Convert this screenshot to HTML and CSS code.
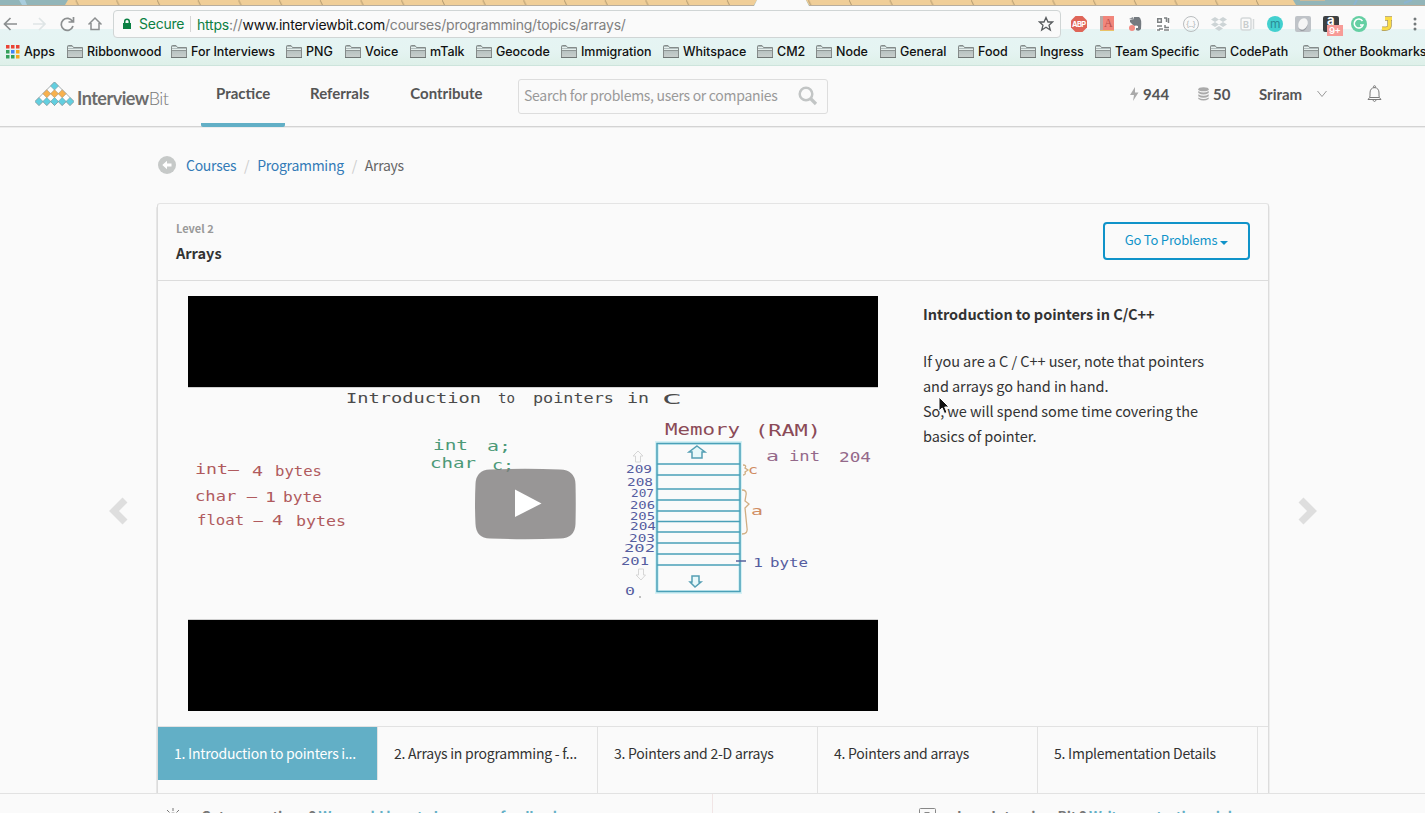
FILE: index.html
```
<!DOCTYPE html>
<html lang="en">
<head>
<meta charset="utf-8">
<title>Arrays - InterviewBit</title>
<link rel="stylesheet" href="styles.css">
</head>
<body>
<svg class="defs" width="0" height="0" aria-hidden="true">
  <defs>
    <linearGradient id="fold" x1="0" y1="0" x2="0" y2="1"><stop offset="0" stop-color="#a9b8b8"/><stop offset="1" stop-color="#c9cfcd"/></linearGradient>
    <pattern id="tabs" width="40.7" height="6" patternUnits="userSpaceOnUse" patternTransform="translate(35 0)"><path d="M0 0L2.500 5" stroke="#b39a70" stroke-width="1"/></pattern>
  </defs>
  <symbol id="folder" viewBox="0 0 16 13">
    <path d="M.5 12.500V1.500Q.5.500 1.500.500H5L6.500 2.500H15.500V12.500Z" fill="url(#fold)" stroke="#858b8a"/>
    <path d="M1 2.500H6M1 4.500H15" stroke="#e5eeec" fill="none"/><path d="M1 5.500H15" stroke="#8f9796"/><path d="M0 12.500H16" stroke="#6f7675"/>
  </symbol>
</svg>

<div class="browser">
  <svg class="tabstrip" width="1425" height="6">
    <rect width="1425" height="6" fill="#92b5b9"/>
    <path d="M19 0H25L27 5H22Z" fill="#a9cddd"/>
    <path d="M68 0H757L754 5H65Z" fill="#f0ce98"/><path d="M68 0H757L754 5H65Z" fill="url(#tabs)"/>
    <path d="M757 0H806L809 6H754Z" fill="#fafafa"/>
    <path d="M806 0H1293L1296 5H809Z" fill="#f0ce98"/><path d="M806 0H1290L1293 5H809Z" fill="url(#tabs)"/>
    <path d="M1300 0H1325" stroke="#c8ba9b" stroke-width="2"/><path d="M1357 0L1354 5M1404 3L1412 0" stroke="#8bb4d0" stroke-width="2"/>
    <path d="M0 5.500H754M809 5.500H1425" stroke="#b8ad9d"/>
  </svg>
  <div class="toolbar">
    <div class="controls">
      <svg width="107" height="28" fill="none" stroke="#8c8f90" stroke-width="1.700">
        <path d="M17 14H5M10.500 8L4.500 14L10.500 20"/>
        <path d="M33 14H44M39 8L45 14L39 20" stroke="#dfe5e6"/>
        <path d="M72.500 11.500A6 6 0 1 0 73 16M73.500 7V12H68.500" />
        <path d="M88.500 14.500L95 8L101.500 14.500M91 13V19.500H99V13" stroke-width="1.500"/>
      </svg>
    </div>
    <div class="omnibox">
      <svg width="10" height="12"><path d="M1 5H9V11H1Z" fill="#0b8043"/><path d="M2.700 5V3.500A2.300 2.300 0 0 1 7.300 3.500V5" fill="none" stroke="#0b8043" stroke-width="1.500"/></svg>
      <span class="secure">Secure</span>
      <span class="url"><b>https</b>://<i>www.interviewbit.com</i>/courses/programming/topics/arrays/</span>
      <svg class="star" width="16" height="16"><path d="M8 1.500L10 6H14.500L11 9.200L12.300 14L8 11.300L3.700 14L5 9.200L1.500 6H6Z" fill="none" stroke="#5a5d60" stroke-width="1.300"/></svg>
    </div>
    <svg class="extensions" width="364" height="28" viewBox="1061 10 364 28">
      <path d="M1075.500 16H1082.500L1087 20.500V27.500L1082.500 32H1075.500L1071 27.500V20.500Z" fill="#df6558"/><text x="1072" y="27.200" textLength="14" font-size="7.500" font-weight="700" fill="#fff">ABP</text>
      <path d="M1100 16H1114V30H1100Z" fill="#f1857b"/><path d="M1100 16H1103V30H1100Z" fill="#b7aaa7"/><text x="1104" y="27" font-size="12" fill="#b94f4b" font-family="Liberation Serif">A</text><path d="M1100 30.500H1114" stroke="#e9c267"/>
      <path d="M1134 17H1139Q1142 18 1141 29Q1139 32 1136 30V28H1138V26Q1136 25 1134 26L1130 22V20H1133Z" fill="#747a80"/><path d="M1129 19L1133 17V20Z" fill="#8c9196"/><circle cx="1132" cy="28" r="3" fill="#f28b82"/>
      <rect x="1156" y="16" width="14" height="15" fill="#fff"/>
      <g fill="none" stroke="#7d8183" stroke-width="1.500"><path d="M1157.700 18.700H1161.300V22.300H1157.700ZM1164 18H1166.500V22M1157 26H1162M1159 29H1163M1165 25V27.500H1169M1157 30H1160M1164 30H1169M1168.500 18V23"/></g>
      <circle cx="1191" cy="24" r="7.500" fill="none" stroke="#b9bdbf"/><text x="1186" y="27" textLength="10" font-size="8" fill="#b0b4b6">{...}</text>
      <path d="M1215 17L1219 19.500L1215 22L1211 19.500ZM1223 17L1227 19.500L1223 22L1219 19.500ZM1215 22L1219 24.500L1215 27L1211 24.500ZM1223 22L1227 24.500L1223 27L1219 24.500ZM1219 26L1223 28.500L1219 31L1215 28.500Z" fill="#cdd4d6"/>
      <rect x="1241" y="18" width="10" height="12" rx="2" fill="none" stroke="#d5d9da" stroke-width="1.500"/><text x="1243" y="28" font-size="9" font-weight="700" fill="#c9cdce">B</text><path d="M1253.500 19V29" stroke="#d5d9da" stroke-width="1.500"/>
      <circle cx="1275" cy="24" r="8" fill="#43d0cf"/><text x="1270" y="28" font-size="12" fill="#2b8b96">m</text>
      <rect x="1295" y="16" width="16" height="16" rx="2" fill="#bfc3c8"/><ellipse cx="1303" cy="24" rx="4.500" ry="6" fill="#f5f5f5" transform="rotate(25 1303 24)"/><path d="M1298 28Q1304 33 1308 24Q1306 32 1301 31" fill="#999da3"/>
      <rect x="1323" y="16" width="16" height="16" rx="2" fill="#3d4042"/><text x="1327" y="25" font-size="13" font-weight="700" fill="#fff">a</text><rect x="1327" y="25" width="16" height="11" fill="#f79b97"/><text x="1329" y="34.200" textLength="12" font-size="9.500" font-weight="600" fill="#fff">9+</text>
      <circle cx="1359" cy="24" r="8" fill="#65cfa3"/><path d="M1362.500 21A4.500 4.500 0 1 0 1363 25H1360" fill="none" stroke="#fff" stroke-width="1.500"/>
      <path d="M1385 18.500H1392M1389.500 19V26Q1389 29.500 1382 28.500" fill="none" stroke="#a9975a" stroke-width="4.500"/><path d="M1385 18.500H1392M1389.500 19V26Q1389 29.500 1382 28.500" fill="none" stroke="#fadb48" stroke-width="3"/>
      <g fill="#74797b"><circle cx="1415" cy="19" r="1.500"/><circle cx="1415" cy="24" r="1.500"/><circle cx="1415" cy="29" r="1.500"/></g>
    </svg>
  </div>
  <div class="bookmarks">
    <span><svg width="14" height="14"><g fill="#ea4335"><path d="M0 0H3.500V3.500H0ZM5 0H8.500V3.500H5ZM10 0H13.500V3.500H10Z"/></g><path d="M0 5H3.500V8.500H0ZM0 10H3.500V13.500H0ZM5 10H8.500V13.500H5Z" fill="#34a05a"/><path d="M5 5H8.500V8.500H5Z" fill="#4285f4"/><path d="M10 5H13.500V8.500H10ZM10 10H13.500V13.500H10Z" fill="#f4a81c"/></svg>Apps</span>
    <span><svg width="16" height="13"><use href="#folder"/></svg>Ribbonwood</span>
    <span><svg width="16" height="13"><use href="#folder"/></svg>For Interviews</span>
    <span><svg width="16" height="13"><use href="#folder"/></svg>PNG</span>
    <span><svg width="16" height="13"><use href="#folder"/></svg>Voice</span>
    <span><svg width="16" height="13"><use href="#folder"/></svg>mTalk</span>
    <span><svg width="16" height="13"><use href="#folder"/></svg>Geocode</span>
    <span><svg width="16" height="13"><use href="#folder"/></svg>Immigration</span>
    <span><svg width="16" height="13"><use href="#folder"/></svg>Whitspace</span>
    <span><svg width="16" height="13"><use href="#folder"/></svg>CM2</span>
    <span><svg width="16" height="13"><use href="#folder"/></svg>Node</span>
    <span><svg width="16" height="13"><use href="#folder"/></svg>General</span>
    <span><svg width="16" height="13"><use href="#folder"/></svg>Food</span>
    <span><svg width="16" height="13"><use href="#folder"/></svg>Ingress</span>
    <span><svg width="16" height="13"><use href="#folder"/></svg>Team Specific</span>
    <span><svg width="16" height="13"><use href="#folder"/></svg>CodePath</span>
    <span><svg width="16" height="13"><use href="#folder"/></svg>Other Bookmarks</span>
  </div>
</div>

<header class="site-header">
  <a class="logo">
    <svg width="39" height="24" viewBox="0 0 39 24">
      <g stroke="#8d9799" stroke-width=".8"><path d="M19.500 0L39 19.500L35 23.500L31.200 19.500L27.200 23.500L23.400 19.500L19.500 23.500L15.600 19.500L11.800 23.500L7.900 19.500L4 23.500L0 19.500Z" fill="#fff"/></g>
      <g fill="#62cfe0" stroke="#7f9a9f" stroke-width=".6"><path d="M19.500 0L23.500 4L19.500 8L15.500 4ZM4 15.500L8 19.500L4 23.500L0 19.500ZM11.800 15.500L15.800 19.500L11.800 23.500L7.800 19.500ZM19.500 15.500L23.500 19.500L19.500 23.500L15.500 19.500ZM27.200 15.500L31.200 19.500L27.200 23.500L23.200 19.500ZM35 15.500L39 19.500L35 23.500L31 19.500Z"/></g>
      <g fill="#f8b14e" stroke="#a5957c" stroke-width=".6"><path d="M11.800 7.700L15.800 11.700L11.800 15.700L7.800 11.700ZM19.500 7.700L23.500 11.700L19.500 15.700L15.500 11.700ZM27.200 7.700L31.200 11.700L27.200 15.700L23.200 11.700Z"/></g>
    </svg>
    <span class="wordmark"><b>Interview</b>Bit</span>
  </a>
  <nav class="nav"><a class="active">Practice</a><a>Referrals</a><a>Contribute</a></nav>
  <div class="search"><span>Search for problems, users or companies</span>
    <svg width="20" height="20" fill="none" stroke="#c2c5c5"><circle cx="8" cy="8" r="6.300" stroke-width="2.500"/><path d="M12.500 12.500L18 18" stroke-width="3.200"/></svg>
  </div>
  <div class="account">
    <span class="stat"><svg width="9" height="14"><path d="M5 0L0 8H4L3 14L8.500 5.500H5Z" fill="#aaa"/></svg>944</span>
    <span class="stat"><svg width="11" height="14"><g fill="#aaa"><ellipse cx="5.500" cy="2.300" rx="5.200" ry="2"/><path d="M.3 4Q5.500 7 10.700 4V6Q5.500 9 .3 6ZM.3 7.200Q5.500 10.200 10.700 7.200V9.200Q5.500 12.200 .3 9.200ZM.3 10.400Q5.500 13.400 10.700 10.400V12Q5.500 15 .3 12Z"/></g></svg>50</span>
    <span class="user">Sriram<svg width="10" height="8"><path d="M.5 1L5 6.500L9.500 1" fill="none" stroke="#999"/></svg></span>
    <svg class="bell" width="15" height="18" fill="none" stroke="#7b7b7b"><path d="M7.500 2.500Q3 3 3 8V11Q3 12.500 1 14.500H14Q12 12.500 12 11V8Q12 3 7.500 2.500Z"/><circle cx="7.500" cy="1.700" r="1"/><path d="M5.500 15Q7.500 18 9.500 15M3 12.500H12"/></svg>
  </div>
</header>

<main class="page">
  <nav class="crumbs">
    <svg width="18" height="18"><circle cx="9" cy="9" r="9" fill="#c6c9c8"/><path d="M4.300 9L9 4.800V7.400H13.500V10.600H9V13.200Z" fill="#fff"/></svg>
    <a>Courses</a><i>/</i><a>Programming</a><i>/</i><span>Arrays</span>
  </nav>
  <div class="stage">
    <svg class="prev" width="22" height="30"><path d="M17 4L6 15L17 26" fill="none" stroke="#dedede" stroke-width="7"/></svg>
    <section class="card">
      <div class="card-head">
        <div><p class="level">Level 2</p><h1>Arrays</h1></div>
        <button class="goto"><span>Go To Problems</span><svg width="8" height="4"><path d="M0 0H8L4 4Z" fill="#0f93c9"/></svg></button>
      </div>
      <div class="lesson">
        <svg class="video" width="690" height="415" viewBox="188 296 690 415">
          <rect x="188" y="296" width="690" height="91"/><rect x="188" y="620" width="690" height="91"/>
          <path d="M188 387.500H878M188 619.500H878" stroke="#cfcfcf"/>
          <g class="ink dark"><text x="346" y="403" textLength="135" lengthAdjust="spacingAndGlyphs">Introduction</text><text x="498" y="403" textLength="17" lengthAdjust="spacingAndGlyphs">to</text><text x="533" y="403" textLength="81" lengthAdjust="spacingAndGlyphs">pointers</text><text x="627" y="403" textLength="22" lengthAdjust="spacingAndGlyphs">in</text><text x="662" y="404" textLength="20" lengthAdjust="spacingAndGlyphs">C</text></g>
          <g class="ink red"><text x="195" y="474" textLength="44" lengthAdjust="spacingAndGlyphs">int–</text><text x="252" y="476" textLength="11" lengthAdjust="spacingAndGlyphs">4</text><text x="275" y="476" textLength="47" lengthAdjust="spacingAndGlyphs">bytes</text><text x="195" y="501" textLength="62" lengthAdjust="spacingAndGlyphs">char –</text><text x="265" y="502" textLength="11" lengthAdjust="spacingAndGlyphs">1</text><text x="283" y="502" textLength="39" lengthAdjust="spacingAndGlyphs">byte</text><text x="197" y="525" textLength="66" lengthAdjust="spacingAndGlyphs">float –</text><text x="272" y="525" textLength="11" lengthAdjust="spacingAndGlyphs">4</text><text x="296" y="526" textLength="50" lengthAdjust="spacingAndGlyphs">bytes</text></g>
          <g class="ink green"><text x="433" y="450" textLength="35" lengthAdjust="spacingAndGlyphs">int</text><text x="487" y="451" textLength="24" lengthAdjust="spacingAndGlyphs">a;</text><text x="430" y="468" textLength="46" lengthAdjust="spacingAndGlyphs">char</text><text x="492" y="470" textLength="22" lengthAdjust="spacingAndGlyphs">c;</text></g>
          <g class="ink maroon"><text x="665" y="435" textLength="75" lengthAdjust="spacingAndGlyphs">Memory</text><text x="755" y="436" textLength="66" lengthAdjust="spacingAndGlyphs">(RAM)</text></g>
          <g class="ink plum"><text x="766" y="461" textLength="13" lengthAdjust="spacingAndGlyphs">a</text><text x="789" y="461" textLength="31" lengthAdjust="spacingAndGlyphs">int</text><text x="839" y="462" textLength="32" lengthAdjust="spacingAndGlyphs">204</text></g>
          <path d="M657 443H740V592H657Z" fill="none" stroke="#d5f1f5" stroke-width="4"/>
          <path d="M657 443.500H740V591.500H657ZM657 464H740M657 475H740M657 489H740M657 500H740M657 511H740M657 521.500H740M657 532H740M657 543H740M657 554H740M657 565H740" fill="none" stroke="#4aa0b8" stroke-width="1.500"/>
          <path d="M697 446L705 452H702V458H692V452H689ZM695 587L690 582H692V576H699V582H701Z" fill="#e7f8fa" stroke="#559fb4" stroke-width="1.500"/>
          <path d="M638 451L643 456H640.500V462H635.500V456H633ZM641 580L636 575H638.500V569H643.500V575H645.500Z" fill="none" stroke="#d6d6d6"/>
          <g class="ink blue"><text x="626" y="473" textLength="26" lengthAdjust="spacingAndGlyphs">209</text><text x="627" y="486" textLength="26" lengthAdjust="spacingAndGlyphs">208</text><text x="631" y="497" textLength="23" lengthAdjust="spacingAndGlyphs">207</text><text x="630" y="508.500" textLength="25" lengthAdjust="spacingAndGlyphs">206</text><text x="630" y="519.500" textLength="25" lengthAdjust="spacingAndGlyphs">205</text><text x="630" y="530" textLength="26" lengthAdjust="spacingAndGlyphs">204</text><text x="629" y="541.500" textLength="26" lengthAdjust="spacingAndGlyphs">203</text><text x="624" y="552" textLength="31" lengthAdjust="spacingAndGlyphs">202</text><text x="621" y="565" textLength="28" lengthAdjust="spacingAndGlyphs">201</text><text x="625" y="595" textLength="10" lengthAdjust="spacingAndGlyphs">0</text></g>
          <path d="M736 561H746" stroke="#56629d" stroke-width="1.500"/><circle cx="640" cy="597" r="1" fill="#aaa"/>
          <g class="ink indigo"><text x="753" y="567" textLength="10" lengthAdjust="spacingAndGlyphs">1</text><text x="770" y="567" textLength="38" lengthAdjust="spacingAndGlyphs">byte</text></g>
          <g fill="none" stroke="#d0ae83" stroke-width="1.300"><path d="M743 465Q747 465 745 468L748 470L745 472Q746 475 743 475M742 490Q747 490 746 495L745 501L749 504L745 508L747 528Q748 534 742 534"/></g>
          <g class="ink orange"><text x="748" y="474" textLength="10" lengthAdjust="spacingAndGlyphs">c</text><text x="751" y="515" textLength="12" lengthAdjust="spacingAndGlyphs">a</text></g>
          <path d="M490 469.500Q525 468 560 469.500Q575 470 575.500 484Q576 504 575.500 524Q575 538 560 538.500Q525 540 490 538.500Q476 538 475.500 524Q474.500 504 475.500 484Q476 470 490 469.500Z" fill="#7f7d7d" fill-opacity=".8"/><path d="M515 489.500L541.500 503.500L515 517Z" fill="#fff"/>
        </svg>
        <article class="notes">
          <h2>Introduction to pointers in C/C++</h2>
          <p>If you are a C / C++ user, note that pointers<br>and arrays go hand in hand.<br>So, we will spend some time covering the<br>basics of pointer.</p>
        </article>
      </div>
      <div class="steps">
        <a class="current">1. Introduction to pointers i...</a><a>2. Arrays in programming - f...</a><a>3. Pointers and 2-D arrays</a><a>4. Pointers and arrays</a><a>5. Implementation Details</a>
      </div>
    </section>
    <svg class="next" width="22" height="30"><path d="M5 4L16 15L5 26" fill="none" stroke="#dedede" stroke-width="7"/></svg>
  </div>
</main>

<footer class="feedback">
  <div class="suggest">
    <svg width="16" height="20" fill="none" stroke="#777"><path d="M8 1V4M2 3L4.500 5.500M14 3L11.500 5.500M0 9H2M14 9H16M4 11A4 5 0 1 1 12 11"/></svg>
    <span>Got suggestions ? <a>We would love to hear your feedback.</a></span>
  </div>
  <div class="love">
    <svg width="18" height="20" fill="none" stroke="#888"><rect x=".5" y="1.500" width="16" height="15" rx="1"/><path d="M6 5V9M6 5.500H10M10 5V9"/></svg>
    <span>Love Interview Bit ? <a>Write us a testimonial.</a></span>
  </div>
</footer>
<svg class="cursor" width="14" height="20"><path d="M1 1V15L4.200 12L6.500 17.500L9 16.500L6.700 11H11Z" fill="#111" stroke="#fff"/></svg>
</body>
</html>
```
FILE: styles.css
```
* { box-sizing: border-box; }
body { margin: 0; width: 1425px; height: 813px; overflow: hidden; background: #fafafa; color: #333; font-family: "Noto Sans CJK SC", sans-serif; font-size: 15px; display: flex; flex-direction: column; }
svg { display: block; flex: none; }
.defs { position: absolute; }
p, h1, h2 { margin: 0; }

.browser { height: 66px; flex: none; font-family: Inter, sans-serif; background: linear-gradient(#fafafa 29px, #e6f4f4 29px, #e5f4f2 50px, #def0e9 65px); border-bottom: 1px solid #cde4dc; }
.toolbar { height: 32px; padding-top: 4px; display: flex; }
.controls { width: 113px; }
.omnibox { width: 948px; height: 28px; border: 1px solid #d0d5d5; border-radius: 4px; background: #fafafa; display: flex; align-items: center; padding: 0 6px 0 8px; font-size: 14px; white-space: nowrap; }
.secure { color: #0b8043; margin-left: 7px; width: 52px; height: 16px; line-height: 16px; border-right: 1px solid #d5d5d5; letter-spacing: -.25px; }
.url { margin-left: 6px; color: #808080; letter-spacing: -.22px; }
.url b { font-weight: 400; color: #0b8043; }
.url i { font-style: normal; color: #111; }
.star { margin-left: auto; }
.bookmarks { height: 27px; padding-left: 6px; display: grid; grid-template-columns: 61px 104px 115px 59px 65px 66px 85px 102px 94px 59px 64px 78px 62px 75px 115px 93px 122px; align-items: center; font-size: 12.5px; font-weight: 500; letter-spacing: -.04px; color: #111; white-space: nowrap; }
.bookmarks span { display: flex; align-items: center; gap: 4px; }

.site-header { height: 61px; display: flex; border-bottom: 1px solid #d3d3d3; box-shadow: 0 1px 0 #ececec; font-family: Lato, sans-serif; flex: none; }
.logo { width: 201px; flex: none; padding: 16px 0 0 35px; display: flex; gap: 3px; color: #777; }
.wordmark { font: 300 18px/30px Lato, sans-serif; letter-spacing: -.5px; margin-top: 1px; }
.wordmark b { color: #6c6c6c; font-weight: 700; }
.nav { width: 317px; flex: none; display: flex; gap: 11px; font-weight: 700; font-size: 15px; color: #555; }
.nav a { height: 61px; padding: 0 15px; line-height: 55px; }
.nav .active { width: 84px; margin-right: -1px; border-bottom: 4px solid #62afc6; border-radius: 0 0 2px 2px; }
.search { width: 310px; flex: none; height: 35px; margin: 13px 0 0; border: 1px solid #ddd; border-radius: 3px; padding: 0 9px 0 5px; display: flex; align-items: center; justify-content: space-between; color: #999; font-family: "Noto Sans CJK SC", sans-serif; font-size: 14px; line-height: 31px; letter-spacing: -.29px; white-space: nowrap; }
.search span { height: 33px; }
.search svg { margin-top: -2px; }
.account { flex: 1; height: 55px; display: grid; grid-template-columns: 68px 61px 108px 15px; padding-left: 302px; align-items: center; font-weight: 700; font-size: 15px; color: #555; }
.stat { display: flex; align-items: center; gap: 4px; }
.user { display: flex; align-items: center; gap: 15px; }

.page { height: 666px; flex: none; overflow: hidden; }
.crumbs { height: 76px; padding: 28px 0 0 158px; display: flex; font-size: 14px; line-height: 20px; letter-spacing: -.28px; color: #666; }
.crumbs svg { margin-top: 1px; }
.crumbs a { color: #337ab7; }
.crumbs a:first-of-type { margin-left: 10px; }
.crumbs i { width: 21px; text-align: center; color: #ccc; font-style: normal; }
.stage { display: grid; grid-template-columns: 157px 1112px 156px; }
.prev { margin: 293px 0 0 108px; }
.next { margin: 293px 0 0 27px; }
.card { height: 600px; border: 1px solid #dcdcdc; border-top-color: #e4e4e4; border-radius: 3px; box-shadow: -2px 3px 0 -1px #e6e6e6, -1px 3px 0 #e6e6e6, 1px 2px 0 #eee; }
.card-head { height: 77px; border-bottom: 1px solid #dcdcdc; padding: 17px 18px 0; display: flex; justify-content: space-between; }
.level { font-size: 11px; line-height: 15px; font-weight: 700; color: #999; }
h1 { font-size: 14.500px; line-height: 20px; margin-top: 7px; font-weight: 700; }
.goto { width: 147px; height: 38px; margin-top: 1px; border: 2px solid #0f93c9; border-radius: 4px; background: none; color: #0f93c9; font: 13px/20px "Noto Sans CJK SC", sans-serif; letter-spacing: -.2px; padding: 0; display: flex; align-items: center; justify-content: center; gap: 3px; }
.goto span { margin-top: -2px; }
.goto svg { margin-top: 3px; }
.lesson { height: 445px; padding: 15px 30px 0; display: flex; gap: 45px; }
.notes { padding-top: 5px; white-space: nowrap; letter-spacing: -.06px; }
h2 { font-size: 14.500px; line-height: 25px; font-weight: 700; }
.notes p { margin-top: 22px; font-size: 14.500px; line-height: 25px; }
.steps { height: 80px; border-top: 1px solid #e2e2e2; display: flex; font-size: 14px; line-height: 53px; letter-spacing: -.24px; white-space: nowrap; }
.steps a { width: 220px; padding-left: 16px; border-right: 1px solid #e2e2e2; }
.steps .current { height: 53px; background: #62afc6; color: #fff; }

.ink { font-family: "DejaVu Sans Mono", monospace; font-size: 14px; }
.dark { fill: #4b4b4b; } .red { fill: #b05a5e; } .green { fill: #4b9977; }
.maroon { fill: #8b4a57; font-size: 16px; } .plum { fill: #94698a; }
.blue { fill: #555da0; font-size: 10px; } .indigo { fill: #555da0; font-size: 13px; } .orange { fill: #d08c62; font-size: 13px; }

.feedback { height: 20px; flex: none; border-top: 1px solid #e2e2e2; display: grid; grid-template-columns: 712px 1fr; overflow: hidden; font-size: 14px; line-height: 20px; font-weight: 700; letter-spacing: -.3px; color: #777; white-space: nowrap; }
.feedback a { color: #62afc6; }
.feedback div { display: flex; height: 40px; padding-top: 13px; }
.feedback span { margin-top: -1px; }
.suggest { padding-left: 165px; gap: 20px; }
.love { padding-left: 206px; gap: 20px; border-left: 1px solid #f1e5e5; }
.cursor { position: absolute; left: 938px; top: 396px; }
```
